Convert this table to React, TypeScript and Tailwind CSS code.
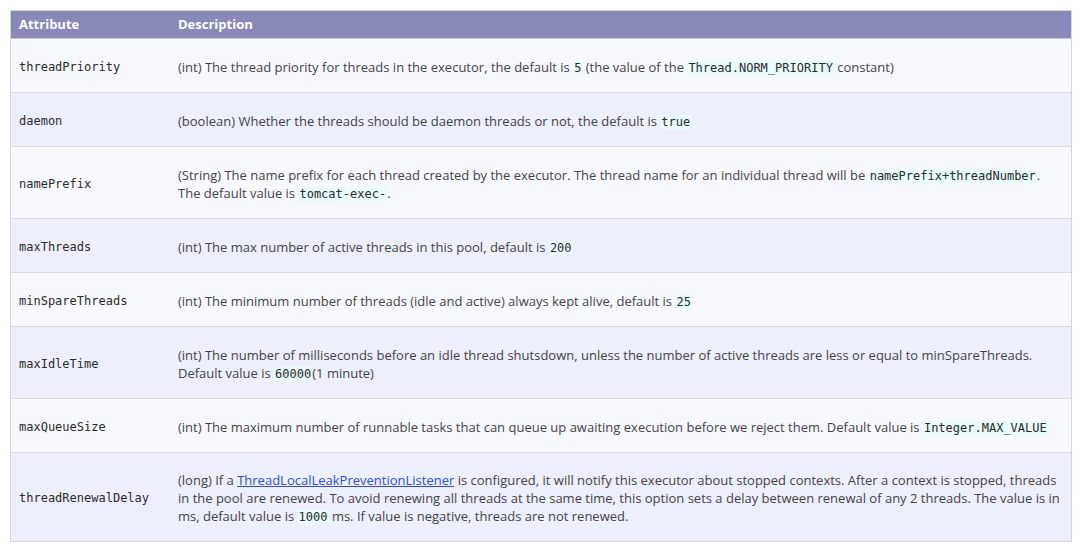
import React from "react";

const C = ({ children }: { children: React.ReactNode }) => (
  <code className="bg-[#e9fcfb] text-[#2b2b2b] text-[12px] leading-none font-['DejaVu_Sans_Mono',monospace] px-[1px]">{children}</code>
);

type Row = { name: string; desc: React.ReactNode };

const rows: Row[] = [
  {
    name: "threadPriority",
    desc: (
      <>
        (int) The thread priority for threads in the executor, the default is <C>5</C> (the value of the <C>Thread.NORM_PRIORITY</C> constant)
      </>
    ),
  },
  {
    name: "daemon",
    desc: (
      <>
        (boolean) Whether the threads should be daemon threads or not, the default is <C>true</C>
      </>
    ),
  },
  {
    name: "namePrefix",
    desc: (
      <>
        (String) The name prefix for each thread created by the executor. The thread name for an individual thread will be <C>namePrefix+threadNumber</C>.
        <br />
        The default value is <C>tomcat-exec-</C>.
      </>
    ),
  },
  {
    name: "maxThreads",
    desc: (
      <>
        (int) The max number of active threads in this pool, default is <C>200</C>
      </>
    ),
  },
  {
    name: "minSpareThreads",
    desc: (
      <>
        (int) The minimum number of threads (idle and active) always kept alive, default is <C>25</C>
      </>
    ),
  },
  {
    name: "maxIdleTime",
    desc: (
      <>
        (int) The number of milliseconds before an idle thread shutsdown, unless the number of active threads are less or equal to minSpareThreads.
        <br />
        Default value is <C>60000</C>(1 minute)
      </>
    ),
  },
  {
    name: "maxQueueSize",
    desc: (
      <>
        (int) The maximum number of runnable tasks that can queue up awaiting execution before we reject them. Default value is <C>Integer.MAX_VALUE</C>
      </>
    ),
  },
  {
    name: "threadRenewalDelay",
    desc: (
      <>
        (long) If a <a className="text-[#2f4fd6] underline">ThreadLocalLeakPreventionListener</a> is configured, it will notify this executor about stopped contexts. After a context is stopped, threads in the pool are renewed. To avoid renewing all threads at the same time, this option sets a delay between renewal of any 2 threads. The value is in ms, default value is <C>1000</C> ms. If value is negative, threads are not renewed.
      </>
    ),
  },
];

export default function App() {
  return (
    <div className="w-[1080px] h-[554px] bg-white pt-[10px] pl-[10px] font-['Open_Sans',sans-serif] text-[13px] text-[#444]">
      <div className="w-[1062px] border border-[#d6d6d6]">
        <div className="flex bg-[#8888b9] text-white font-bold h-[28px] items-center border-b border-[#c8c8d8]">
          <div className="w-[167px] pl-[8px]">Attribute</div>
          <div className="flex-1">Description</div>
        </div>
        {rows.map((r, i) => (
          <div
            key={r.name}
            className={`flex items-center border-b border-[#dcdcdc] last:border-b-0 ${i % 2 === 0 ? "bg-[#f8f9fe]" : "bg-[#eeeffc]"} ${i === 7 ? "pt-[18px] pb-[16px]" : "pt-[19px] pb-[16px]"}`}
          >
            <div className="w-[167px] pl-[8px] shrink-0 font-['DejaVu_Sans_Mono',monospace] text-[12px] leading-[18px] text-[#2b2b2b]">{r.name}</div>
            <div className="flex-1 leading-[18px] pr-[8px]">{r.desc}</div>
          </div>
        ))}
      </div>
    </div>
  );
}
